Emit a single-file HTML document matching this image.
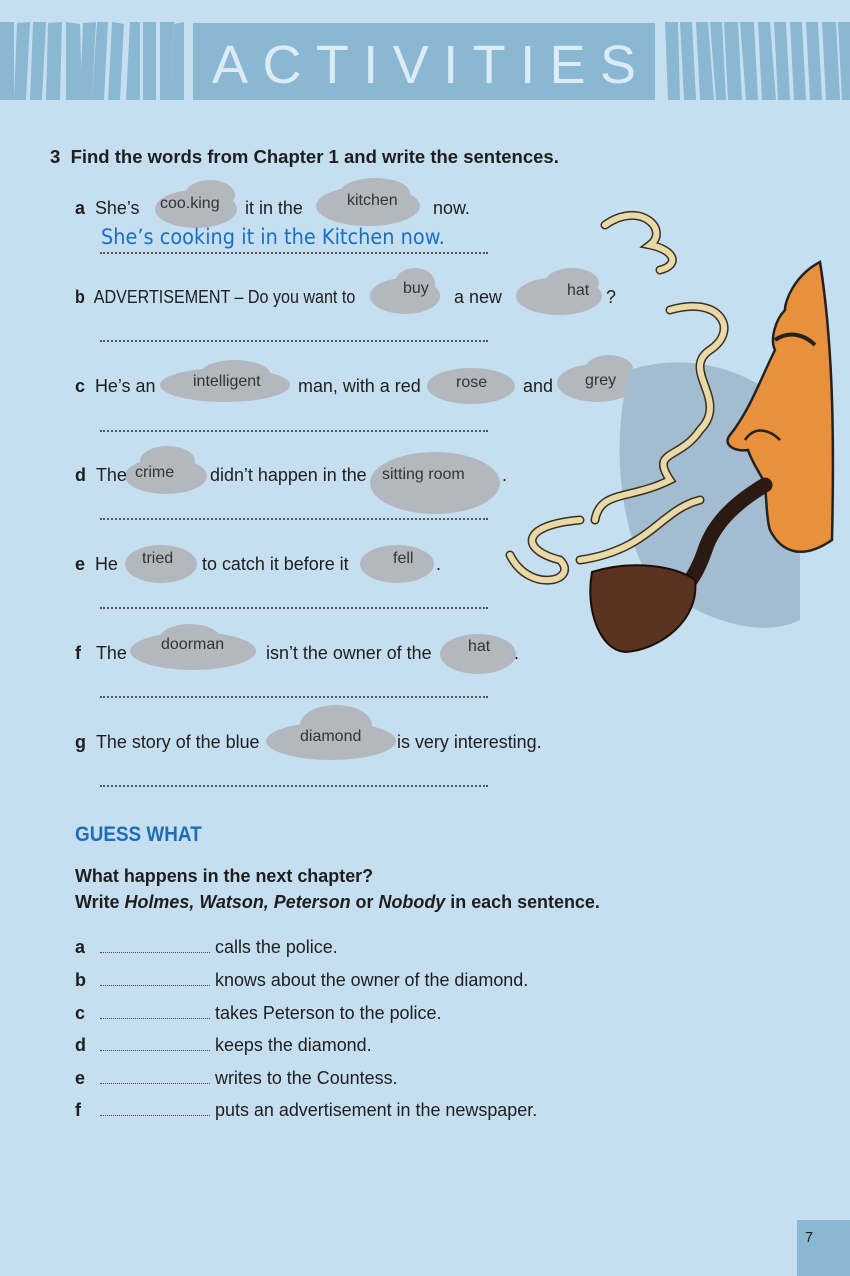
<!DOCTYPE html>
<html><head><meta charset="utf-8"><style>
body{margin:0;width:850px;height:1276px;background:#c6dff0;position:relative;overflow:hidden;font-family:"Liberation Sans Narrow","Liberation Sans",sans-serif;color:#1e1e1e}
.t{position:absolute;font-size:18.5px;white-space:nowrap;transform-origin:0 0;transform:scaleX(.97)}
.b{font-weight:bold}
.c{position:absolute;background:#b2b8bd;border-radius:50%}
.cw{position:absolute;font-size:16px;color:#333;font-family:"Liberation Sans Narrow","Liberation Sans",sans-serif}
.dl{position:absolute;left:100px;width:388px;border-top:2px dotted #555;height:0}
.sd{position:absolute;left:100px;width:110px;border-top:1.5px dotted #444}
</style></head><body>
<svg style="position:absolute;left:0;top:0" width="850" height="110">
<g fill="#8ab8d2">
<polygon points="0,22 14,22 14,100 0,100"/>
<polygon points="17,23 30,22 26,100 14,100"/>
<polygon points="33,22 46,22 42,100 30,100"/>
<polygon points="48,23 62,22 60,100 46,100"/>
<polygon points="66,22 80,24 82,100 66,100"/>
<polygon points="83,23 96,22 92,100 80,100"/>
<polygon points="97,22 108,22 104,100 92,100"/>
<polygon points="112,22 124,24 120,100 108,100"/>
<polygon points="130,22 140,22 140,100 126,100"/>
<polygon points="143,22 156,22 156,100 143,100"/>
<polygon points="160,22 174,22 170,100 160,100"/>
<polygon points="174,24 184,22 184,100 170,100"/>
<rect x="193" y="23" width="462" height="77"/>
<polygon points="665,22 678,22 680,100 668,100"/>
<polygon points="680,22 692,22 696,100 684,100"/>
<polygon points="696,22 708,22 714,100 700,100"/>
<polygon points="710,22 722,22 726,100 716,100"/>
<polygon points="724,22 738,22 742,100 728,100"/>
<polygon points="740,22 754,22 758,100 746,100"/>
<polygon points="758,22 770,22 776,100 762,100"/>
<polygon points="774,22 786,22 790,100 778,100"/>
<polygon points="790,22 802,22 806,100 794,100"/>
<polygon points="806,22 818,22 822,100 810,100"/>
<polygon points="822,22 836,22 840,100 826,100"/>
<polygon points="838,22 850,22 850,100 842,100"/>
</g>
<text x="212" y="83" fill="#dcebf5" font-family="Liberation Sans" font-size="54" textLength="424" lengthAdjust="spacing">ACTIVITIES</text>
</svg>

<div class="t b" style="left:50px;top:146px;transform:scaleX(1)">3&nbsp;&nbsp;Find the words from Chapter 1 and write the sentences.</div>

<div class="c" style="left:155px;top:190px;width:82px;height:38px"></div><div class="c" style="left:185px;top:180px;width:50px;height:30px"></div>
<div class="c" style="left:316px;top:186px;width:104px;height:40px"></div><div class="c" style="left:340px;top:178px;width:70px;height:30px"></div>
<div class="t" style="left:75px;top:197px"><b>a</b>&nbsp;&nbsp;She’s</div>
<div class="cw" style="left:160px;top:195px">coo.king</div>
<div class="t" style="left:245px;top:197px">it in the</div>
<div class="cw" style="left:347px;top:192px">kitchen</div>
<div class="t" style="left:433px;top:197px">now.</div>
<div style="position:absolute;left:101px;top:225px;font-family:'DejaVu Sans',sans-serif;font-size:21px;color:#1a6fc0;transform:scaleX(.92);transform-origin:0 0;white-space:nowrap">She’s cooking it in the Kitchen now.</div>
<div class="dl" style="top:252px"></div>

<div class="c" style="left:370px;top:278px;width:70px;height:36px"></div><div class="c" style="left:395px;top:268px;width:40px;height:30px"></div>
<div class="c" style="left:516px;top:277px;width:86px;height:38px"></div><div class="c" style="left:545px;top:268px;width:54px;height:30px"></div>
<div class="t" style="left:75px;top:286px;transform:scaleX(.87)"><b>b</b>&nbsp;&nbsp;ADVERTISEMENT – Do you want to</div>
<div class="cw" style="left:403px;top:280px">buy</div>
<div class="t" style="left:454px;top:286px">a new</div>
<div class="cw" style="left:567px;top:282px">hat</div>
<div class="t" style="left:606px;top:286px">?</div>
<div class="dl" style="top:340px"></div>

<div class="c" style="left:160px;top:368px;width:130px;height:34px"></div><div class="c" style="left:200px;top:360px;width:70px;height:28px"></div>
<div class="c" style="left:427px;top:368px;width:88px;height:36px"></div>
<div class="c" style="left:557px;top:364px;width:80px;height:38px"></div><div class="c" style="left:585px;top:355px;width:48px;height:28px"></div>
<div class="t" style="left:75px;top:375px"><b>c</b>&nbsp;&nbsp;He’s an</div>
<div class="cw" style="left:193px;top:373px">intelligent</div>
<div class="t" style="left:298px;top:375px">man, with a red</div>
<div class="cw" style="left:456px;top:374px">rose</div>
<div class="t" style="left:523px;top:375px">and</div>
<div class="cw" style="left:585px;top:372px">grey</div>
<div class="t" style="left:643px;top:375px">hair.</div>
<div class="dl" style="top:430px"></div>

<div class="c" style="left:125px;top:458px;width:82px;height:36px"></div><div class="c" style="left:140px;top:446px;width:55px;height:30px"></div>
<div class="c" style="left:370px;top:452px;width:130px;height:62px"></div>
<div class="t" style="left:75px;top:464px"><b>d</b>&nbsp;&nbsp;The</div>
<div class="cw" style="left:135px;top:464px">crime</div>
<div class="t" style="left:210px;top:464px">didn’t happen in the</div>
<div class="cw" style="left:382px;top:466px">sitting room</div>
<div class="t" style="left:502px;top:464px">.</div>
<div class="dl" style="top:518px"></div>

<div class="c" style="left:125px;top:545px;width:72px;height:38px"></div>
<div class="c" style="left:360px;top:545px;width:74px;height:38px"></div>
<div class="t" style="left:75px;top:553px"><b>e</b>&nbsp;&nbsp;He</div>
<div class="cw" style="left:142px;top:550px">tried</div>
<div class="t" style="left:202px;top:553px">to catch it before it</div>
<div class="cw" style="left:393px;top:550px">fell</div>
<div class="t" style="left:436px;top:553px">.</div>
<div class="dl" style="top:607px"></div>

<div class="c" style="left:130px;top:632px;width:126px;height:38px"></div><div class="c" style="left:160px;top:624px;width:60px;height:28px"></div>
<div class="c" style="left:440px;top:634px;width:76px;height:40px"></div>
<div class="t" style="left:75px;top:642px"><b>f</b>&nbsp;&nbsp;&nbsp;The</div>
<div class="cw" style="left:161px;top:636px">doorman</div>
<div class="t" style="left:266px;top:642px">isn’t the owner of the</div>
<div class="cw" style="left:468px;top:638px">hat</div>
<div class="t" style="left:514px;top:642px">.</div>
<div class="dl" style="top:696px"></div>

<div class="c" style="left:266px;top:722px;width:130px;height:38px"></div><div class="c" style="left:300px;top:705px;width:72px;height:40px"></div>
<div class="t" style="left:75px;top:731px"><b>g</b>&nbsp;&nbsp;The story of the blue</div>
<div class="cw" style="left:300px;top:728px">diamond</div>
<div class="t" style="left:397px;top:731px">is very interesting.</div>
<div class="dl" style="top:785px"></div>

<div class="t b" style="left:75px;top:823px;font-size:21px;color:#1f6eb5;transform:scaleX(.9)">GUESS WHAT</div>
<div class="t b" style="left:75px;top:865px">What happens in the next chapter?</div>
<div class="t b" style="left:75px;top:891px">Write <i>Holmes, Watson, Peterson</i> or <i>Nobody</i> in each sentence.</div>

<div class="t b" style="left:75px;top:936px">a</div><div class="sd" style="top:952px"></div><div class="t" style="left:215px;top:936px">calls the police.</div>
<div class="t b" style="left:75px;top:969px">b</div><div class="sd" style="top:985px"></div><div class="t" style="left:215px;top:969px">knows about the owner of the diamond.</div>
<div class="t b" style="left:75px;top:1002px">c</div><div class="sd" style="top:1018px"></div><div class="t" style="left:215px;top:1002px">takes Peterson to the police.</div>
<div class="t b" style="left:75px;top:1034px">d</div><div class="sd" style="top:1050px"></div><div class="t" style="left:215px;top:1034px">keeps the diamond.</div>
<div class="t b" style="left:75px;top:1067px">e</div><div class="sd" style="top:1083px"></div><div class="t" style="left:215px;top:1067px">writes to the Countess.</div>
<div class="t b" style="left:75px;top:1099px">f</div><div class="sd" style="top:1115px"></div><div class="t" style="left:215px;top:1099px">puts an advertisement in the newspaper.</div>

<svg style="position:absolute;left:500px;top:200px" width="350" height="460">
<path d="M130,170 C190,150 260,170 300,220 L300,420 C260,440 200,420 150,380 C120,330 110,240 130,170Z" fill="#a4bccf"/>
<g fill="none" stroke="#3a3020" stroke-width="9" stroke-linecap="round">
<path d="M105,25 C140,0 170,30 150,45 C175,50 180,65 160,70"/>
<path d="M170,110 C220,95 240,130 210,150 C180,170 230,200 200,230 C180,260 150,250 170,280 C130,300 100,290 95,320"/>
<path d="M80,320 C20,325 20,350 60,360 C80,380 30,395 10,355"/>
<path d="M80,360 C150,350 160,310 200,300"/>
</g>
<g fill="none" stroke="#e8d9a6" stroke-width="6" stroke-linecap="round">
<path d="M105,25 C140,0 170,30 150,45 C175,50 180,65 160,70"/>
<path d="M170,110 C220,95 240,130 210,150 C180,170 230,200 200,230 C180,260 150,250 170,280 C130,300 100,290 95,320"/>
<path d="M80,320 C20,325 20,350 60,360 C80,380 30,395 10,355"/>
<path d="M80,360 C150,350 160,310 200,300"/>
</g>
<path d="M320,62 C295,75 285,100 285,110 C275,120 270,140 275,150 C260,180 250,210 230,235 C222,245 235,252 248,250 C252,262 258,270 262,278 C268,290 265,315 270,330 C280,350 300,362 332,340 C334,250 334,150 320,62Z" fill="#e8903c" stroke="#222" stroke-width="2.5"/>
<path d="M275,140 C290,130 305,135 315,145" stroke="#222" stroke-width="4" fill="none"/>
<path d="M245,240 C255,225 270,230 280,240" stroke="#222" stroke-width="2.5" fill="none"/>
<path d="M265,285 C240,300 215,320 205,350 C195,380 180,395 170,400" stroke="#2a1a12" stroke-width="15" fill="none" stroke-linecap="round"/>
<path d="M92,372 C130,360 175,365 195,380 C200,420 160,450 125,452 C100,450 85,410 92,372Z" fill="#5a3320" stroke="#1a0e08" stroke-width="2"/>
</svg>

<div style="position:absolute;left:797px;top:1220px;width:53px;height:56px;background:#8ab8d2"></div>
<div class="t" style="left:805px;top:1229px;font-size:15px">7</div>
</body></html>
